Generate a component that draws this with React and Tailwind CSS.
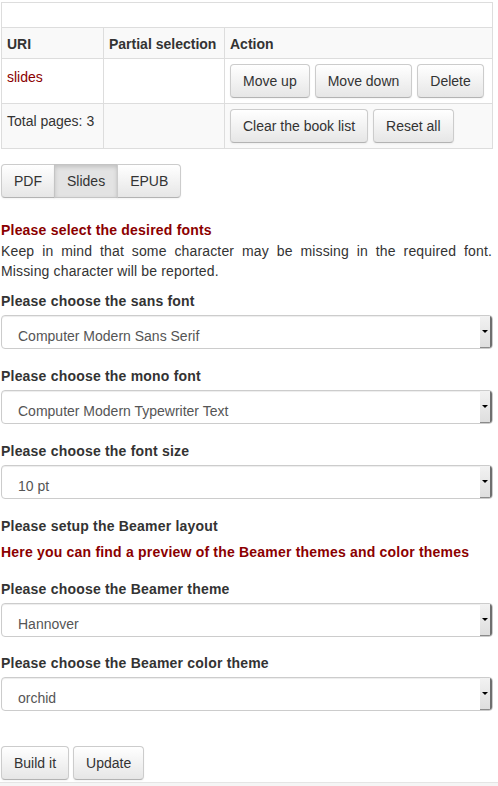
import React from "react";

const btn =
  "h-[34px] px-[12px] py-[6px] border border-[#cccccc] border-b-[#b3b3b3] rounded-[4px] bg-gradient-to-b from-white to-[#e6e6e6] text-[#333] shadow-[inset_0_1px_0_rgba(255,255,255,0.2),0_1px_2px_rgba(0,0,0,0.05)] leading-[20px] whitespace-nowrap";

function Select({ value }) {
  return (
    <div className="flex h-[34px] w-[492px] border border-[#cccccc] rounded-[4px] bg-white overflow-hidden shadow-[inset_0_1px_1px_rgba(0,0,0,0.075)]">
      <div className="flex-1 pl-[16px] pt-[10px] text-[#555] leading-[20px] text-[14px]">{value}</div>
      <div className="w-[12px] flex items-center justify-center bg-gradient-to-b from-[#f2f2f2] to-[#dedede] border-r-2 border-r-[#6e6e6e] border-b border-b-[#8a8a8a]">
        <div className="w-0 h-0 border-l-[3px] border-r-[3px] border-t-[3px] border-l-transparent border-r-transparent border-t-black" />
      </div>
    </div>
  );
}

function Label({ children, className = "" }) {
  return <div className={"font-bold leading-[20px] text-[#333] tracking-[0.2px] " + className}>{children}</div>;
}

export default function App() {
  return (
    <div className="w-[498px] min-h-[786px] bg-white font-['Liberation_Sans',Arial,sans-serif] text-[14px] leading-[20px] text-[#333] flex flex-col">
      <div className="pl-px pt-[2px] w-[493px]">
        {/* table */}
        <div className="w-[492px] border-t border-l border-[#dddddd]">
          <div className="h-[25px] border-r border-b border-[#dddddd] bg-white" />
          <div className="grid grid-cols-[102px_121px_1fr] bg-[#f9f9f9] font-bold">
            <div className="h-[31px] border-r border-b border-[#dddddd] px-[5px] pt-[6px]">URI</div>
            <div className="h-[31px] border-r border-b border-[#dddddd] px-[5px] pt-[6px] whitespace-nowrap">Partial selection</div>
            <div className="h-[31px] border-r border-b border-[#dddddd] px-[5px] pt-[6px]">Action</div>
          </div>
          <div className="grid grid-cols-[102px_121px_1fr] bg-white">
            <div className="h-[45px] border-r border-b border-[#dddddd] px-[5px] pt-[8px] text-[#8b0000]">slides</div>
            <div className="h-[45px] border-r border-b border-[#dddddd]" />
            <div className="h-[45px] border-r border-b border-[#dddddd] p-[5px] flex gap-[5px]">
              <button className={btn}>Move up</button>
              <button className={btn}>Move down</button>
              <button className={btn}>Delete</button>
            </div>
          </div>
          <div className="grid grid-cols-[102px_121px_1fr] bg-[#f9f9f9]">
            <div className="h-[45px] border-r border-b border-[#dddddd] px-[5px] pt-[7px] whitespace-nowrap">Total pages: 3</div>
            <div className="h-[45px] border-r border-b border-[#dddddd]" />
            <div className="h-[45px] border-r border-b border-[#dddddd] p-[5px] flex gap-[5px]">
              <button className={btn}>Clear the book list</button>
              <button className={btn}>Reset all</button>
            </div>
          </div>
        </div>

        {/* tabs */}
        <div className="mt-[15px] flex">
          <button className={btn + " rounded-r-none"}>PDF</button>
          <button className="-ml-px h-[34px] px-[12px] py-[6px] border border-[#c4c4c4] bg-[#e3e3e3] text-[#333] shadow-[inset_0_2px_4px_rgba(0,0,0,0.15),0_1px_2px_rgba(0,0,0,0.05)] leading-[20px]">
            Slides
          </button>
          <button className={btn + " -ml-px rounded-l-none"}>EPUB</button>
        </div>

        <div className="mt-[22px] font-bold text-[#8b0000] leading-[20px] tracking-[0.2px]">Please select the desired fonts</div>
        <p className="mt-px mb-[10px] text-justify w-[491px] leading-[20px] tracking-[0.15px]">
          Keep in mind that some character may be missing in the required font. Missing character will be reported.
        </p>

        <Label className="mb-[4px]">Please choose the sans font</Label>
        <Select value="Computer Modern Sans Serif" />

        <Label className="mt-[17px] mb-[4px]">Please choose the mono font</Label>
        <Select value="Computer Modern Typewriter Text" />

        <Label className="mt-[17px] mb-[4px]">Please choose the font size</Label>
        <Select value="10 pt" />

        <Label className="mt-[17px]">Please setup the Beamer layout</Label>
        <div className="mt-[6px] font-bold text-[#8b0000] leading-[20px] tracking-[0.2px]">
          Here you can find a preview of the Beamer themes and color themes
        </div>

        <Label className="mt-[17px] mb-[4px]">Please choose the Beamer theme</Label>
        <Select value="Hannover" />

        <Label className="mt-[16px] mb-[4px]">Please choose the Beamer color theme</Label>
        <Select value="orchid" />

        <div className="mt-[35px] flex gap-[4px]">
          <button className={btn}>Build it</button>
          <button className={btn}>Update</button>
        </div>
      </div>
      <div className="mt-[2px] flex-1 border-t border-[#e5e5e5] bg-[#f5f5f5]" />
    </div>
  );
}
